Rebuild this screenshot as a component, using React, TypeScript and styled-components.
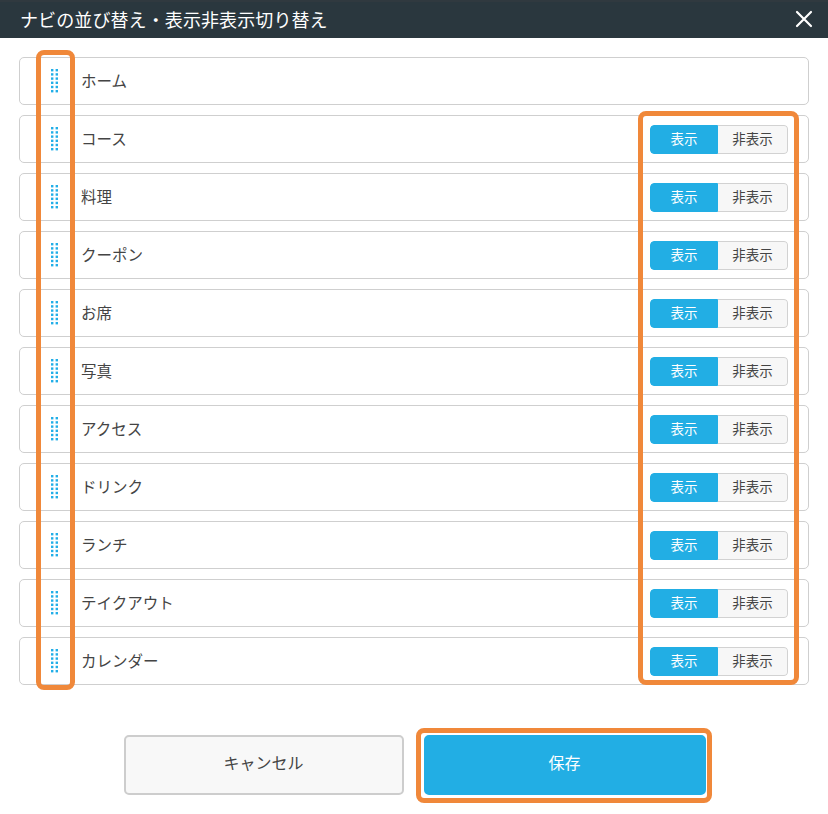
import React from 'react';
import styled, { createGlobalStyle } from 'styled-components';

const GlobalStyle = createGlobalStyle`
  html, body {
    margin: 0;
    padding: 0;
    background: #fff;
  }
  body {
    font-family: "Noto Sans CJK JP", "Noto Sans", sans-serif;
    color: #333;
  }
`;

const Modal = styled.div`
  position: relative;
  width: 828px;
  height: 814px;
  background: #fff;
`;

const Header = styled.div`
  height: 38px;
  background: #2a373e;
  border-top: 2px solid #30393f;
  box-sizing: border-box;
  display: flex;
  align-items: center;
  justify-content: space-between;
  padding: 0 14px 2px 20px;
`;

const Title = styled.h1`
  margin: 0;
  font-size: 18px;
  font-weight: 400;
  color: #fff;
  letter-spacing: 0.1px;
`;

const CloseButton = styled.button`
  border: 0;
  background: none;
  padding: 0;
  width: 20px;
  height: 20px;
  display: flex;
  align-items: center;
  justify-content: center;
  cursor: pointer;
`;

const Body = styled.div`
  padding: 19px 19px 0;
  display: flex;
  flex-direction: column;
  gap: 10px;
`;

const Row = styled.div`
  height: 48px;
  box-sizing: border-box;
  border: 1px solid #cfcfcf;
  border-radius: 5px;
  display: flex;
  align-items: center;
  padding: 0 20px 0 31px;
`;

const Label = styled.span`
  flex: 1;
  margin-left: 22px;
  padding-bottom: 3px;
  font-size: 15.5px;
  color: #444;
`;

const Segment = styled.div`
  display: flex;
  height: 29px;
  border-radius: 4px;
  overflow: hidden;
`;

const SegmentButton = styled.button<{ $active?: boolean }>`
  font-family: inherit;
  font-size: 13.5px;
  padding: 0 0 3px;
  margin: 0;
  cursor: pointer;
  width: ${({ $active }) => ($active ? '68px' : '70px')};
  color: ${({ $active }) => ($active ? '#fff' : '#444')};
  background: ${({ $active }) => ($active ? '#22aee4' : '#f7f7f7')};
  border: 1px solid ${({ $active }) => ($active ? '#22aee4' : '#d2d2d2')};
  border-left: ${({ $active }) => ($active ? '1px solid #22aee4' : '0')};
  border-radius: ${({ $active }) => ($active ? '4px 0 0 4px' : '0 4px 4px 0')};
`;

const Footer = styled.div`
  display: flex;
  justify-content: center;
  gap: 20px;
  padding-top: 50px;
  padding-left: 1px;
`;

const FooterButton = styled.button<{ $primary?: boolean }>`
  font-family: inherit;
  font-size: 16px;
  height: 60px;
  padding: 0 0 6px;
  width: ${({ $primary }) => ($primary ? '282px' : '280px')};
  box-sizing: border-box;
  border-radius: 5px;
  cursor: pointer;
  color: ${({ $primary }) => ($primary ? '#fff' : '#444')};
  background: ${({ $primary }) => ($primary ? '#22aee4' : '#f8f8f8')};
  border: 2px solid ${({ $primary }) => ($primary ? '#22aee4' : '#cdcdcd')};
`;

const Highlight = styled.div<{ $x: number; $y: number; $w: number; $h: number }>`
  position: absolute;
  left: ${({ $x }) => $x}px;
  top: ${({ $y }) => $y}px;
  width: ${({ $w }) => $w}px;
  height: ${({ $h }) => $h}px;
  box-sizing: border-box;
  border: 5px solid #f0883a;
  border-radius: 8px;
  pointer-events: none;
`;

const DragHandle = () => (
  <svg width="8" height="24" viewBox="0 0 8 24" style={{ flexShrink: 0 }}>
    {[0, 1, 2, 3, 4, 5].map((r) =>
      [0, 1].map((c) => (
        <rect
          key={`${r}-${c}`}
          x={c * 4.6}
          y={r * 4.2}
          width="2.4"
          height="2.4"
          fill="#22aee8"
        />
      ))
    )}
  </svg>
);

const CloseIcon = () => (
  <svg width="18" height="18" viewBox="0 0 18 18">
    <path d="M2 2 L16 16 M16 2 L2 16" stroke="#fff" strokeWidth="2.2" strokeLinecap="round" />
  </svg>
);

const items = [
  { name: 'ホーム', toggle: false },
  { name: 'コース', toggle: true },
  { name: '料理', toggle: true },
  { name: 'クーポン', toggle: true },
  { name: 'お席', toggle: true },
  { name: '写真', toggle: true },
  { name: 'アクセス', toggle: true },
  { name: 'ドリンク', toggle: true },
  { name: 'ランチ', toggle: true },
  { name: 'テイクアウト', toggle: true },
  { name: 'カレンダー', toggle: true },
];

export default function App() {
  return (
    <>
      <GlobalStyle />
      <Modal>
        <Header>
          <Title>ナビの並び替え・表示非表示切り替え</Title>
          <CloseButton aria-label="閉じる">
            <CloseIcon />
          </CloseButton>
        </Header>
        <Body>
          {items.map((item) => (
            <Row key={item.name}>
              <DragHandle />
              <Label>{item.name}</Label>
              {item.toggle && (
                <Segment>
                  <SegmentButton $active>表示</SegmentButton>
                  <SegmentButton>非表示</SegmentButton>
                </Segment>
              )}
            </Row>
          ))}
        </Body>
        <Footer>
          <FooterButton>キャンセル</FooterButton>
          <FooterButton $primary>保存</FooterButton>
        </Footer>
        <Highlight $x={36} $y={50} $w={39} $h={640} />
        <Highlight $x={638} $y={111} $w={161} $h={574} />
        <Highlight $x={416} $y={728} $w={296} $h={75} />
      </Modal>
    </>
  );
}
